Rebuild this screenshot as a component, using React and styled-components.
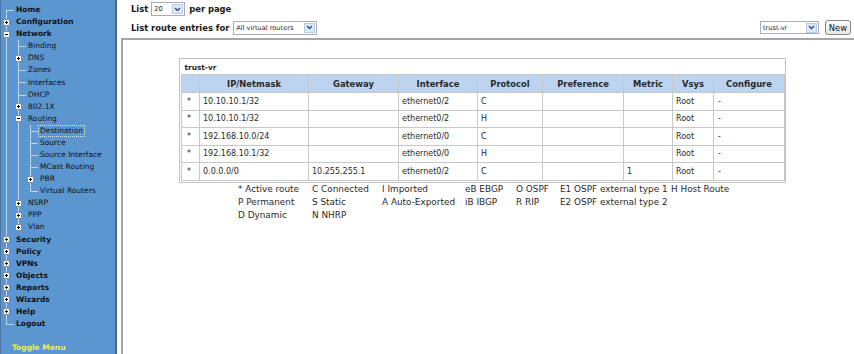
import React from "react";
import styled, { createGlobalStyle } from "styled-components";

const GlobalStyle = createGlobalStyle`
  html, body { margin: 0; padding: 0; background: #fff; }
  body {
    width: 854px;
    height: 354px;
    overflow: hidden;
    font-family: "DejaVu Sans", Verdana, sans-serif;
  }
`;

const Page = styled.div`
  display: flex;
  width: 854px;
  height: 354px;
`;

const Sidebar = styled.nav`
  width: 114px;
  flex: none;
  background: #5b96d1;
  border-left: 1px solid #4b76a3;
  border-right: 2px solid #46698f;
  display: flex;
  flex-direction: column;
  padding-top: 4px;
`;

const LINE = "linear-gradient(#c3d5ea, #c3d5ea)";

const treeLines = ({ $level, $first, $last, $icon }) => {
  const imgs = [];
  for (let k = 0; k < $level; k++) {
    imgs.push(`${LINE} ${5 + 12 * k}px 0 / 1px 100% no-repeat`);
  }
  const top = $first ? 6 : 0;
  const bottom = $last ? 6 : 13;
  imgs.push(`${LINE} ${5 + 12 * $level}px ${top}px / 1px ${bottom - top}px no-repeat`);
  if (!$icon) {
    imgs.push(`${LINE} ${5 + 12 * $level}px 6px / 8px 1px no-repeat`);
  }
  return imgs.join(", ");
};

const Row = styled.div`
  height: 12.08px;
  display: flex;
  align-items: center;
  padding-left: ${(p) => 2 + p.$level * 12}px;
  font-size: 7.5px;
  font-weight: ${(p) => (p.$bold ? 700 : 400)};
  color: #111;
  white-space: nowrap;
  background: ${treeLines};
`;

const Toggle = styled.span`
  width: 7px;
  height: 7px;
  box-sizing: border-box;
  border: 1px solid #7d8ea3;
  background: #fff;
  position: relative;
  flex: none;
  margin-right: 6px;
  &::before {
    content: "";
    position: absolute;
    left: 1px;
    right: 1px;
    top: 2px;
    height: 1px;
    background: #000;
  }
  &::after {
    content: ${(p) => (p.$open ? "none" : '""')};
    position: absolute;
    top: 1px;
    bottom: 1px;
    left: 2px;
    width: 1px;
    background: #000;
  }
`;

const Spacer = styled.span`
  width: 13px;
  flex: none;
`;

const Label = styled.span`
  border: 1px dotted ${(p) => (p.$selected ? "#dbe5f1" : "transparent")};
  margin-left: -2px;
  padding: 0 1px;
  line-height: 10px;
`;

const ToggleMenu = styled.div`
  margin-top: auto;
  height: 12px;
  padding-left: 11px;
  font-size: 7.5px;
  font-weight: 700;
  color: #f2f244;
  line-height: 12px;
`;

const Main = styled.main`
  flex: 1;
  display: flex;
  flex-direction: column;
  min-width: 0;
`;

const Toolbar = styled.div`
  height: 38px;
  box-sizing: border-box;
  padding: 2px 3px 0 14px;
  display: flex;
  flex-direction: column;
  gap: 4px;
`;

const ToolRow = styled.div`
  display: flex;
  align-items: center;
  justify-content: space-between;
  height: ${(p) => p.$h || 14}px;
`;

const Group = styled.div`
  display: flex;
  align-items: center;
  gap: ${(p) => p.$gap ?? 4}px;
  font-size: 8.4px;
  font-weight: 700;
  color: #1a1a1a;
`;

const SelectBox = styled.div`
  width: ${(p) => p.$w}px;
  height: ${(p) => p.$h || 14}px;
  box-sizing: border-box;
  border: 1px solid #a7aeb8;
  background: #fff;
  display: flex;
  align-items: center;
  justify-content: space-between;
  padding: 0 1px 0 2px;
  font-size: 6.6px;
  font-weight: 400;
  color: #222;
`;

const Arrow = styled.span`
  width: 11px;
  height: 10px;
  box-sizing: border-box;
  background: #dde9fa;
  border: 1px solid #b7cbe8;
  display: flex;
  align-items: center;
  justify-content: center;
`;

const Button = styled.button`
  width: 26px;
  height: 15px;
  padding: 0;
  box-sizing: border-box;
  border: 1px solid #858585;
  border-radius: 3px;
  background: linear-gradient(#fdfdfd, #e8e8e8);
  font-family: "DejaVu Sans", Verdana, sans-serif;
  font-size: 8.4px;
  color: #111;
`;

const Panel = styled.section`
  flex: 1;
  margin-left: 4px;
  border-top: 2px solid #a6a6a6;
  border-left: 2px solid #a6a6a6;
  padding: 18px 0 0 56px;
`;

const TableWrap = styled.div`
  width: 607px;
  box-sizing: border-box;
  border: 1px solid #c2c2c2;
  padding: 1px;
  background: #fff;
`;

const Table = styled.table`
  width: 100%;
  table-layout: fixed;
  border-collapse: collapse;
  font-size: 8px;
  color: #2a2a2a;
`;

const TitleCell = styled.td`
  height: 14px;
  padding: 0 0 0 3px;
  font-weight: 700;
  font-size: 7.4px;
  border-bottom: 1px solid #c8c8c8;
`;

const Th = styled.th`
  height: 17px;
  padding: 0;
  background: #bcd4f0;
  border: 1px solid #c8c8c8;
  font-size: 8.4px;
  font-weight: 700;
  color: #2a2a2a;
  text-align: center;
`;

const Td = styled.td`
  height: 16.5px;
  padding: 0 0 0 ${(p) => p.$pad ?? 3}px;
  border: 1px solid #c8c8c8;
  white-space: nowrap;
`;

const Legend = styled.div`
  margin: 0 0 0 59px;
  display: grid;
  grid-template-columns: 74px 70px 83px 51px 44px 111px auto;
  grid-auto-rows: 13px;
  align-items: center;
  font-size: 8.9px;
  color: #2a2a2a;
  white-space: nowrap;
`;

const chevron = (
  <svg width="7" height="5" viewBox="0 0 7 5">
    <path d="M1 1 L3.5 3.5 L6 1" fill="none" stroke="#2b4f8c" strokeWidth="1.4" />
  </svg>
);

const Select = ({ w, h, children }) => (
  <SelectBox $w={w} $h={h}>
    <span>{children}</span>
    <Arrow>{chevron}</Arrow>
  </SelectBox>
);

const menu = [
  { t: "Home", l: 0, b: true, first: true },
  { t: "Configuration", l: 0, b: true, icon: "+" },
  { t: "Network", l: 0, b: true, icon: "-" },
  { t: "Binding", l: 1 },
  { t: "DNS", l: 1, icon: "+" },
  { t: "Zones", l: 1 },
  { t: "Interfaces", l: 1 },
  { t: "DHCP", l: 1 },
  { t: "802.1X", l: 1, icon: "+" },
  { t: "Routing", l: 1, icon: "-" },
  { t: "Destination", l: 2, sel: true },
  { t: "Source", l: 2 },
  { t: "Source Interface", l: 2 },
  { t: "MCast Routing", l: 2 },
  { t: "PBR", l: 2, icon: "+" },
  { t: "Virtual Routers", l: 2, last: true },
  { t: "NSRP", l: 1, icon: "+" },
  { t: "PPP", l: 1, icon: "+" },
  { t: "Vlan", l: 1, icon: "+", last: true },
  { t: "Security", l: 0, b: true, icon: "+" },
  { t: "Policy", l: 0, b: true, icon: "+" },
  { t: "VPNs", l: 0, b: true, icon: "+" },
  { t: "Objects", l: 0, b: true, icon: "+" },
  { t: "Reports", l: 0, b: true, icon: "+" },
  { t: "Wizards", l: 0, b: true, icon: "+" },
  { t: "Help", l: 0, b: true, icon: "+" },
  { t: "Logout", l: 0, b: true, last: true },
];

const columns = [
  { w: 18, t: "" },
  { w: 109, t: "IP/Netmask" },
  { w: 90, t: "Gateway" },
  { w: 79, t: "Interface" },
  { w: 65, t: "Protocol" },
  { w: 81, t: "Preference" },
  { w: 49, t: "Metric" },
  { w: 41, t: "Vsys" },
  { w: 71, t: "Configure" },
];

const routes = [
  ["10.10.10.1/32", "", "ethernet0/2", "C", "", ""],
  ["10.10.10.1/32", "", "ethernet0/2", "H", "", ""],
  ["192.168.10.0/24", "", "ethernet0/0", "C", "", ""],
  ["192.168.10.1/32", "", "ethernet0/0", "H", "", ""],
  ["0.0.0.0/0", "10.255.255.1", "ethernet0/2", "C", "", "1"],
];

const legend = [
  ["* Active route", "C Connected", "I Imported", "eB EBGP", "O OSPF", "E1 OSPF external type 1", "H Host Route"],
  ["P Permanent", "S Static", "A Auto-Exported", "iB  IBGP", "R RIP", "E2 OSPF external type 2", ""],
  ["D Dynamic", "N NHRP", "", "", "", "", ""],
];

export default function App() {
  return (
    <>
      <GlobalStyle />
      <Page>
        <Sidebar>
          {menu.map((m) => (
            <Row
              key={m.t}
              $level={m.l}
              $bold={m.b}
              $first={m.first}
              $last={m.last}
              $icon={!!m.icon}
            >
              {m.icon ? <Toggle $open={m.icon === "-"} /> : <Spacer />}
              <Label $selected={m.sel}>{m.t}</Label>
            </Row>
          ))}
          <ToggleMenu>Toggle Menu</ToggleMenu>
        </Sidebar>
        <Main>
          <Toolbar>
            <ToolRow>
              <Group $gap={3}>
                List
                <Select w={34}>20</Select>
                <span style={{ marginLeft: 1 }}>per page</span>
              </Group>
            </ToolRow>
            <ToolRow $h={15}>
              <Group>
                List route entries for
                <Select w={84}>All virtual routers</Select>
              </Group>
              <Group $gap={6}>
                <Select w={59} h={13}>trust-vr</Select>
                <Button>New</Button>
              </Group>
            </ToolRow>
          </Toolbar>
          <Panel>
            <TableWrap>
              <Table>
                <colgroup>
                  {columns.map((c, i) => (
                    <col key={i} style={{ width: c.w }} />
                  ))}
                </colgroup>
                <tbody>
                  <tr>
                    <TitleCell colSpan={9}>trust-vr</TitleCell>
                  </tr>
                  <tr>
                    {columns.map((c, i) => (
                      <Th key={i}>{c.t}</Th>
                    ))}
                  </tr>
                  {routes.map((r, i) => (
                    <tr key={i}>
                      <Td $pad={5}>*</Td>
                      <Td>{r[0]}</Td>
                      <Td>{r[1]}</Td>
                      <Td>{r[2]}</Td>
                      <Td>{r[3]}</Td>
                      <Td>{r[4]}</Td>
                      <Td>{r[5]}</Td>
                      <Td>Root</Td>
                      <Td $pad={4}>-</Td>
                    </tr>
                  ))}
                </tbody>
              </Table>
            </TableWrap>
            <Legend>
              {legend.flat().map((t, i) => (
                <span key={i}>{t}</span>
              ))}
            </Legend>
          </Panel>
        </Main>
      </Page>
    </>
  );
}
